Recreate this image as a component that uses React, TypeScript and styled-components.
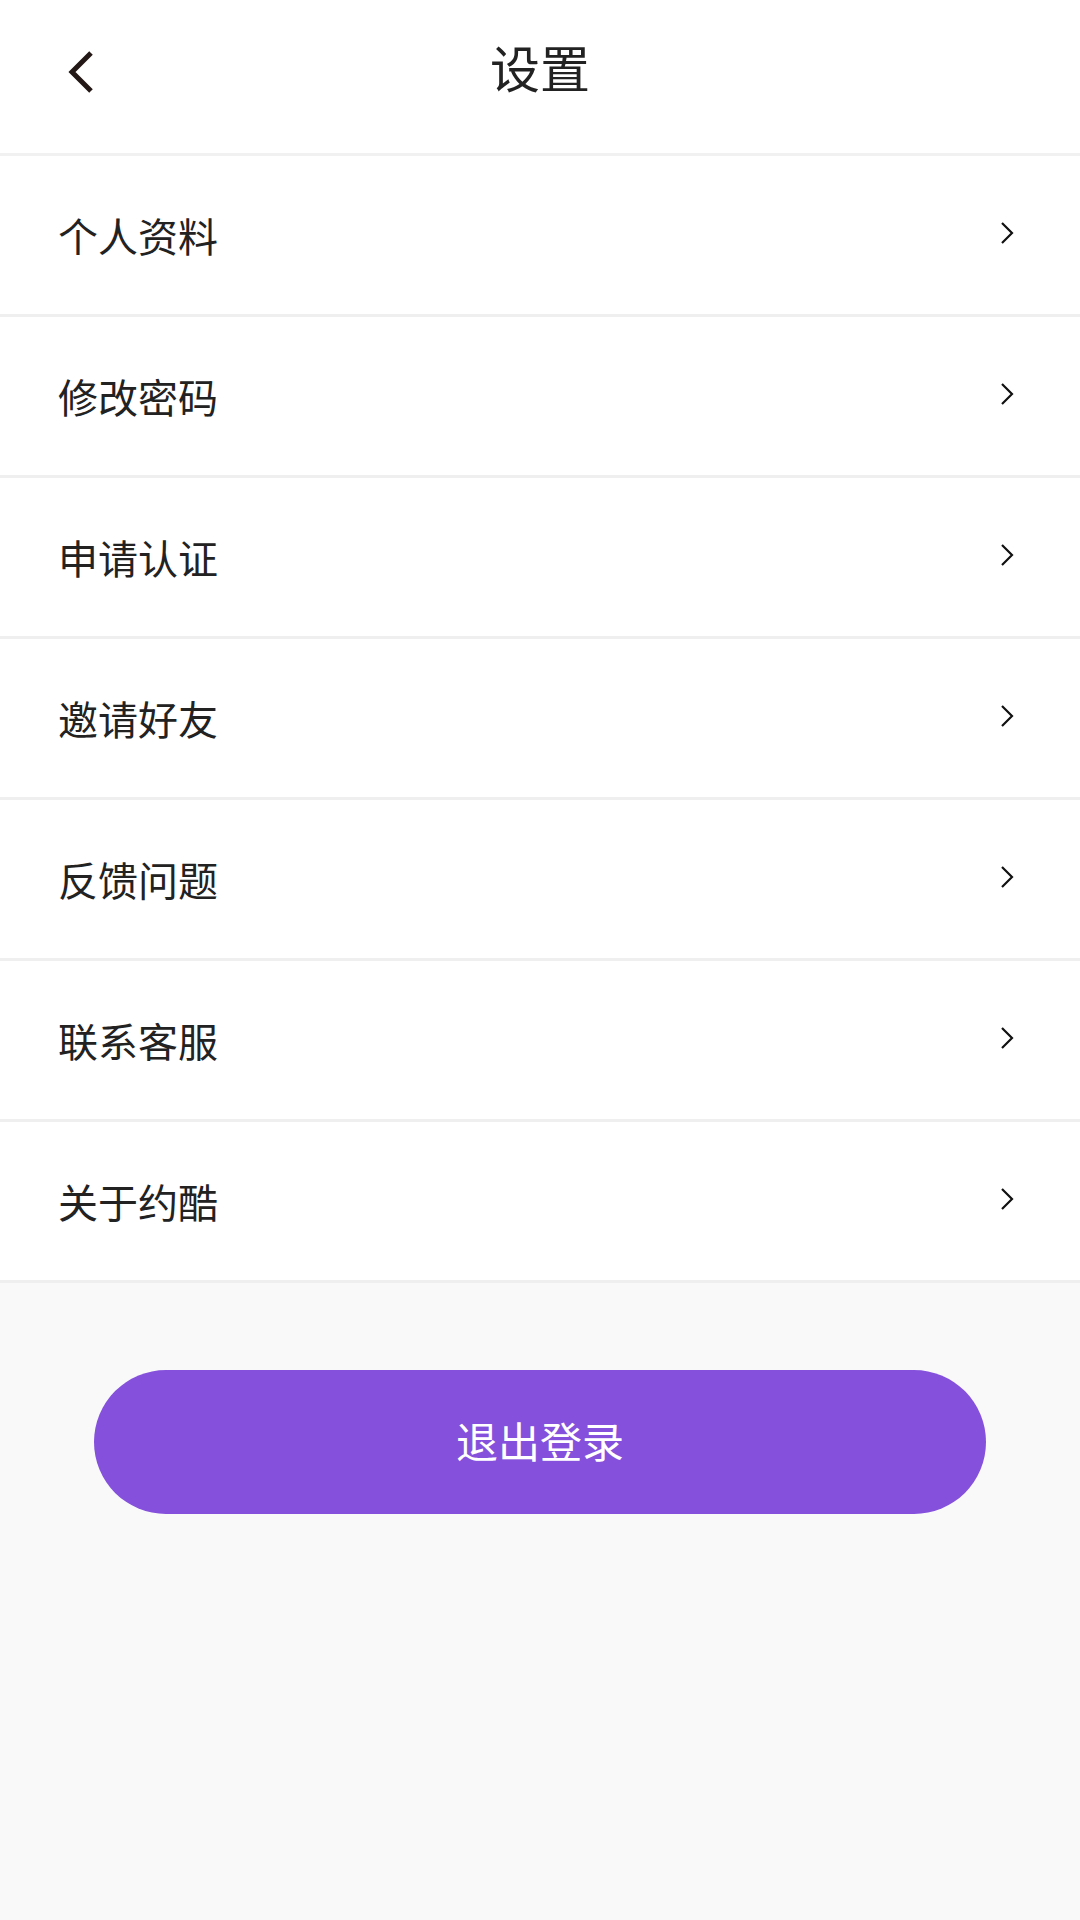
import React from 'react'
import styled, { createGlobalStyle } from 'styled-components'

const GlobalStyle = createGlobalStyle`
  html, body {
    margin: 0;
    padding: 0;
    background: #f9f9f9;
    font-family: 'Noto Sans CJK SC', 'Noto Sans', sans-serif;
  }
`

const Page = styled.div`
  width: 1080px;
  min-height: 1920px;
  background: #f9f9f9;
`

const Header = styled.header`
  position: relative;
  height: 153px;
  display: flex;
  align-items: center;
  justify-content: center;
  background: #ffffff;
  border-bottom: 3px solid #f1f1f1;
`

const BackButton = styled.button`
  position: absolute;
  left: 60px;
  top: 40px;
  width: 40px;
  height: 60px;
  padding: 0;
  border: none;
  background: none;
  display: block;
`

const Title = styled.h1`
  margin: 0;
  font-size: 50px;
  font-weight: 400;
  color: #222222;
  line-height: 1;
  transform: translateY(-11px);
`

const List = styled.ul`
  list-style: none;
  margin: 0;
  padding: 0;
  background: #ffffff;
`

const Row = styled.li`
  height: 158px;
  display: flex;
  align-items: center;
  justify-content: space-between;
  padding: 0 66px 0 58px;
  border-bottom: 3px solid #efefef;
`

const Label = styled.span`
  font-size: 40px;
  color: #222222;
  line-height: 1;
`

const Chevron = styled.svg`
  width: 14px;
  height: 24px;
  margin-top: -4px;
`

const LogoutButton = styled.button`
  display: flex;
  align-items: center;
  justify-content: center;
  width: 892px;
  height: 144px;
  margin: 87px auto 0 94px;
  padding: 0 0 5px;
  border: none;
  border-radius: 72px;
  background: #8450dc;
  color: #ffffff;
  font-family: 'Noto Sans CJK SC', 'Noto Sans', sans-serif;
  font-size: 42px;
  line-height: 1;
`

const items = ['个人资料', '修改密码', '申请认证', '邀请好友', '反馈问题', '联系客服', '关于约酷']

const App: React.FC = () => {
  return (
    <Page>
      <GlobalStyle />
      <Header>
        <BackButton aria-label="返回">
          <svg width="40" height="60" viewBox="0 0 40 60">
            <polyline
              points="31,13 12,32 31,51"
              fill="none"
              stroke="#231815"
              strokeWidth="5"
            />
          </svg>
        </BackButton>
        <Title>设置</Title>
      </Header>
      <List>
        {items.map((item) => (
          <Row key={item}>
            <Label>{item}</Label>
            <Chevron viewBox="0 0 14 24">
              <polyline
                points="2,2 12,12 2,22"
                fill="none"
                stroke="#111111"
                strokeWidth="2.2"
              />
            </Chevron>
          </Row>
        ))}
      </List>
      <LogoutButton>退出登录</LogoutButton>
    </Page>
  )
}

export default App
